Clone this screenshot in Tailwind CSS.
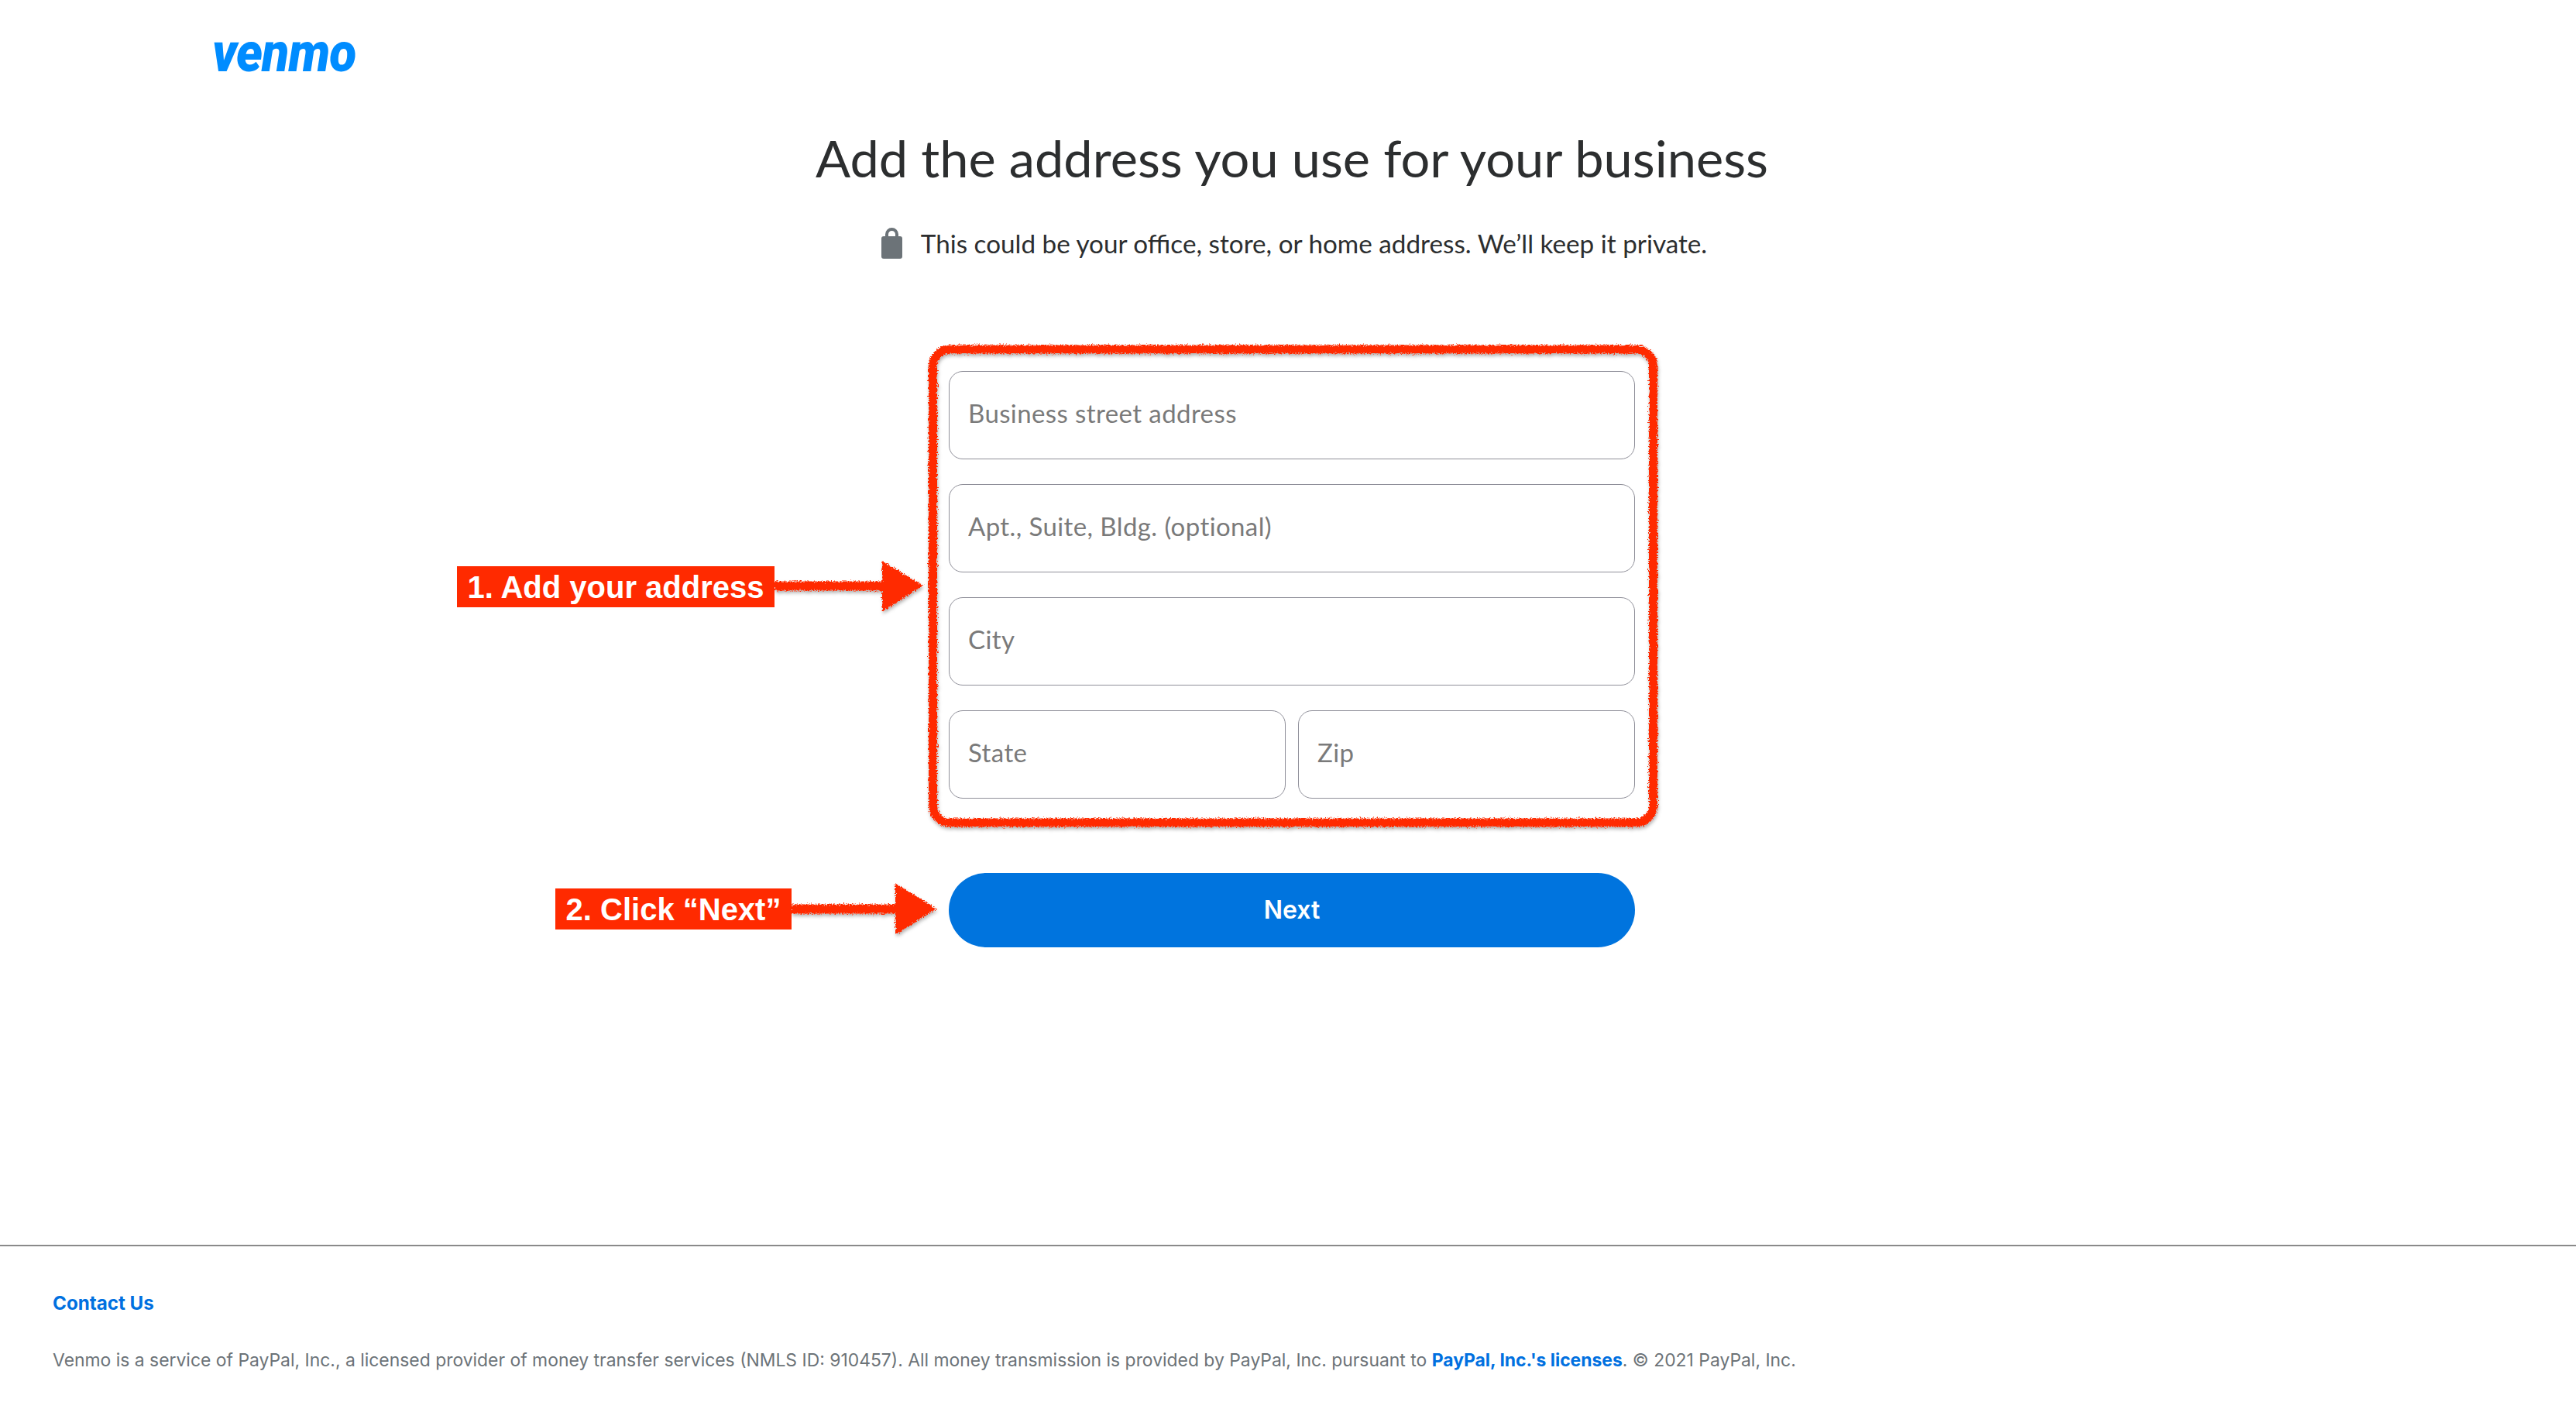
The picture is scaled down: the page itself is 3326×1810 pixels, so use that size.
<!DOCTYPE html>
<html lang="en">
<head>
    <meta charset="UTF-8">
    <title>Venmo - Business address</title>
    <script src="https://cdn.jsdelivr.net/npm/@tailwindcss/browser@4"></script>
</head>
<body class="bg-white font-['Inter',sans-serif] text-[#2c2e2f]">
    <div class="relative flex h-[1810px] w-[3326px] flex-col overflow-hidden">

        <!-- Header -->
        <header class="h-[163px] pl-[274px] pt-[24px]">
            <span class="block w-fit origin-left scale-x-[0.92] font-['Roboto',sans-serif] text-[70px] leading-[88px] font-black tracking-[-1px] text-[#008cff] italic">venmo</span>
        </header>

        <!-- Form -->
        <main class="flex flex-1 flex-col items-center pl-[10px]">
            <h1 class="font-['Lato',sans-serif] text-[66.75px] leading-[80px] font-normal text-[#2c2e2f]">Add the address you use for your business</h1>
            <div class="mt-[51px] ml-[6px] flex h-[40px] items-center gap-[24px]">
                <svg class="h-[40px] w-[27px]" viewBox="0 0 27 40">
                    <path d="M5 14V8.5a8.5 8.5 0 0 1 17 0V14h-4V8.5a4.5 4.5 0 0 0-9 0V14z" fill="#6c7378"/>
                    <rect x="0" y="11" width="27" height="29" rx="3" fill="#6c7378"/>
                </svg>
                <p class="font-['Lato',sans-serif] text-[33.25px] leading-[40px] text-[#2c2e2f]">This could be your office, store, or home address. We’ll keep it private.</p>
            </div>

            <form class="mt-[145px] flex w-[886px] flex-col gap-[32px]">
                <input class="h-[114px] w-full rounded-[18px] border border-[#8f8f99] px-[24px] pb-[6px] font-['Lato',sans-serif] text-[33px] tracking-[0.4px] placeholder:text-[#7a7a7a]" placeholder="Business street address">
                <input class="h-[114px] w-full rounded-[18px] border border-[#8f8f99] px-[24px] pb-[6px] font-['Lato',sans-serif] text-[33px] tracking-[0.4px] placeholder:text-[#7a7a7a]" placeholder="Apt., Suite, Bldg. (optional)">
                <input class="h-[114px] w-full rounded-[18px] border border-[#8f8f99] px-[24px] pb-[6px] font-['Lato',sans-serif] text-[33px] tracking-[0.4px] placeholder:text-[#7a7a7a]" placeholder="City">
                <div class="flex gap-[16px]">
                    <input class="h-[114px] w-[435px] rounded-[18px] border border-[#8f8f99] px-[24px] pb-[6px] font-['Lato',sans-serif] text-[33px] tracking-[0.4px] placeholder:text-[#7a7a7a]" placeholder="State">
                    <input class="h-[114px] w-[435px] rounded-[18px] border border-[#8f8f99] px-[24px] pb-[6px] font-['Lato',sans-serif] text-[33px] tracking-[0.4px] placeholder:text-[#7a7a7a]" placeholder="Zip">
                </div>
                <button type="button" class="mt-[64px] h-[96px] w-full rounded-full bg-[#0074de] font-['Inter',sans-serif] text-[32px] font-semibold text-white">Next</button>
            </form>
        </main>

        <!-- Footer -->
        <footer class="h-[203px] border-t-2 border-[#8a8a8a] pl-[68px] pt-[58px]">
            <a class="block font-['Inter',sans-serif] text-[24.2px] leading-[32px] font-bold text-[#0070e0]">Contact Us</a>
            <p class="mt-[41px] font-['Inter',sans-serif] text-[22.9px] leading-[32px] text-[#6c7378]">Venmo is a service of PayPal, Inc., a licensed provider of money transfer services (NMLS ID: 910457). All money transmission is provided by PayPal, Inc. pursuant to <a class="font-bold text-[#0070e0]">PayPal, Inc.'s licenses</a>. © 2021 PayPal, Inc.</p>
        </footer>

        <!-- Red hand-drawn annotations over the page -->
        <svg class="pointer-events-none absolute inset-0 h-[1810px] w-[3326px]" viewBox="0 0 3326 1810" fill="none">
            <defs>
                <filter id="rough" x="-5%" y="-5%" width="110%" height="110%">
                    <feTurbulence type="fractalNoise" baseFrequency="0.55" numOctaves="2" seed="4" result="noise"/>
                    <feDisplacementMap in="SourceGraphic" in2="noise" scale="7" xChannelSelector="R" yChannelSelector="G"/>
                    <feDropShadow dx="1" dy="3" stdDeviation="2" flood-color="#000" flood-opacity="0.3"/>
                </filter>
            </defs>
            <g filter="url(#rough)">
                <rect x="1204.5" y="451" width="930" height="611" rx="22" stroke="#ff2a00" stroke-width="11"/>
                <path d="M1000 756.5H1145" stroke="#ff2a00" stroke-width="12"/>
                <path d="M1140 726L1190 756L1140 788Z" fill="#ff2a00" stroke="#ff2a00" stroke-width="2"/>
                <path d="M1022 1173.5H1160" stroke="#ff2a00" stroke-width="12"/>
                <path d="M1157 1142L1207 1173L1157 1205Z" fill="#ff2a00" stroke="#ff2a00" stroke-width="2"/>
            </g>
        </svg>
        <div class="absolute top-[731px] left-[590px] flex h-[53px] w-[410px] items-center justify-center bg-[#ff2a00] font-['Liberation_Sans',sans-serif] text-[40px] font-bold text-white">1. Add your address</div>
        <div class="absolute top-[1147px] left-[717px] flex h-[53px] w-[305px] items-center justify-center bg-[#ff2a00] font-['Liberation_Sans',sans-serif] text-[40px] font-bold text-white">2. Click “Next”</div>
    </div>
</body>
</html>
